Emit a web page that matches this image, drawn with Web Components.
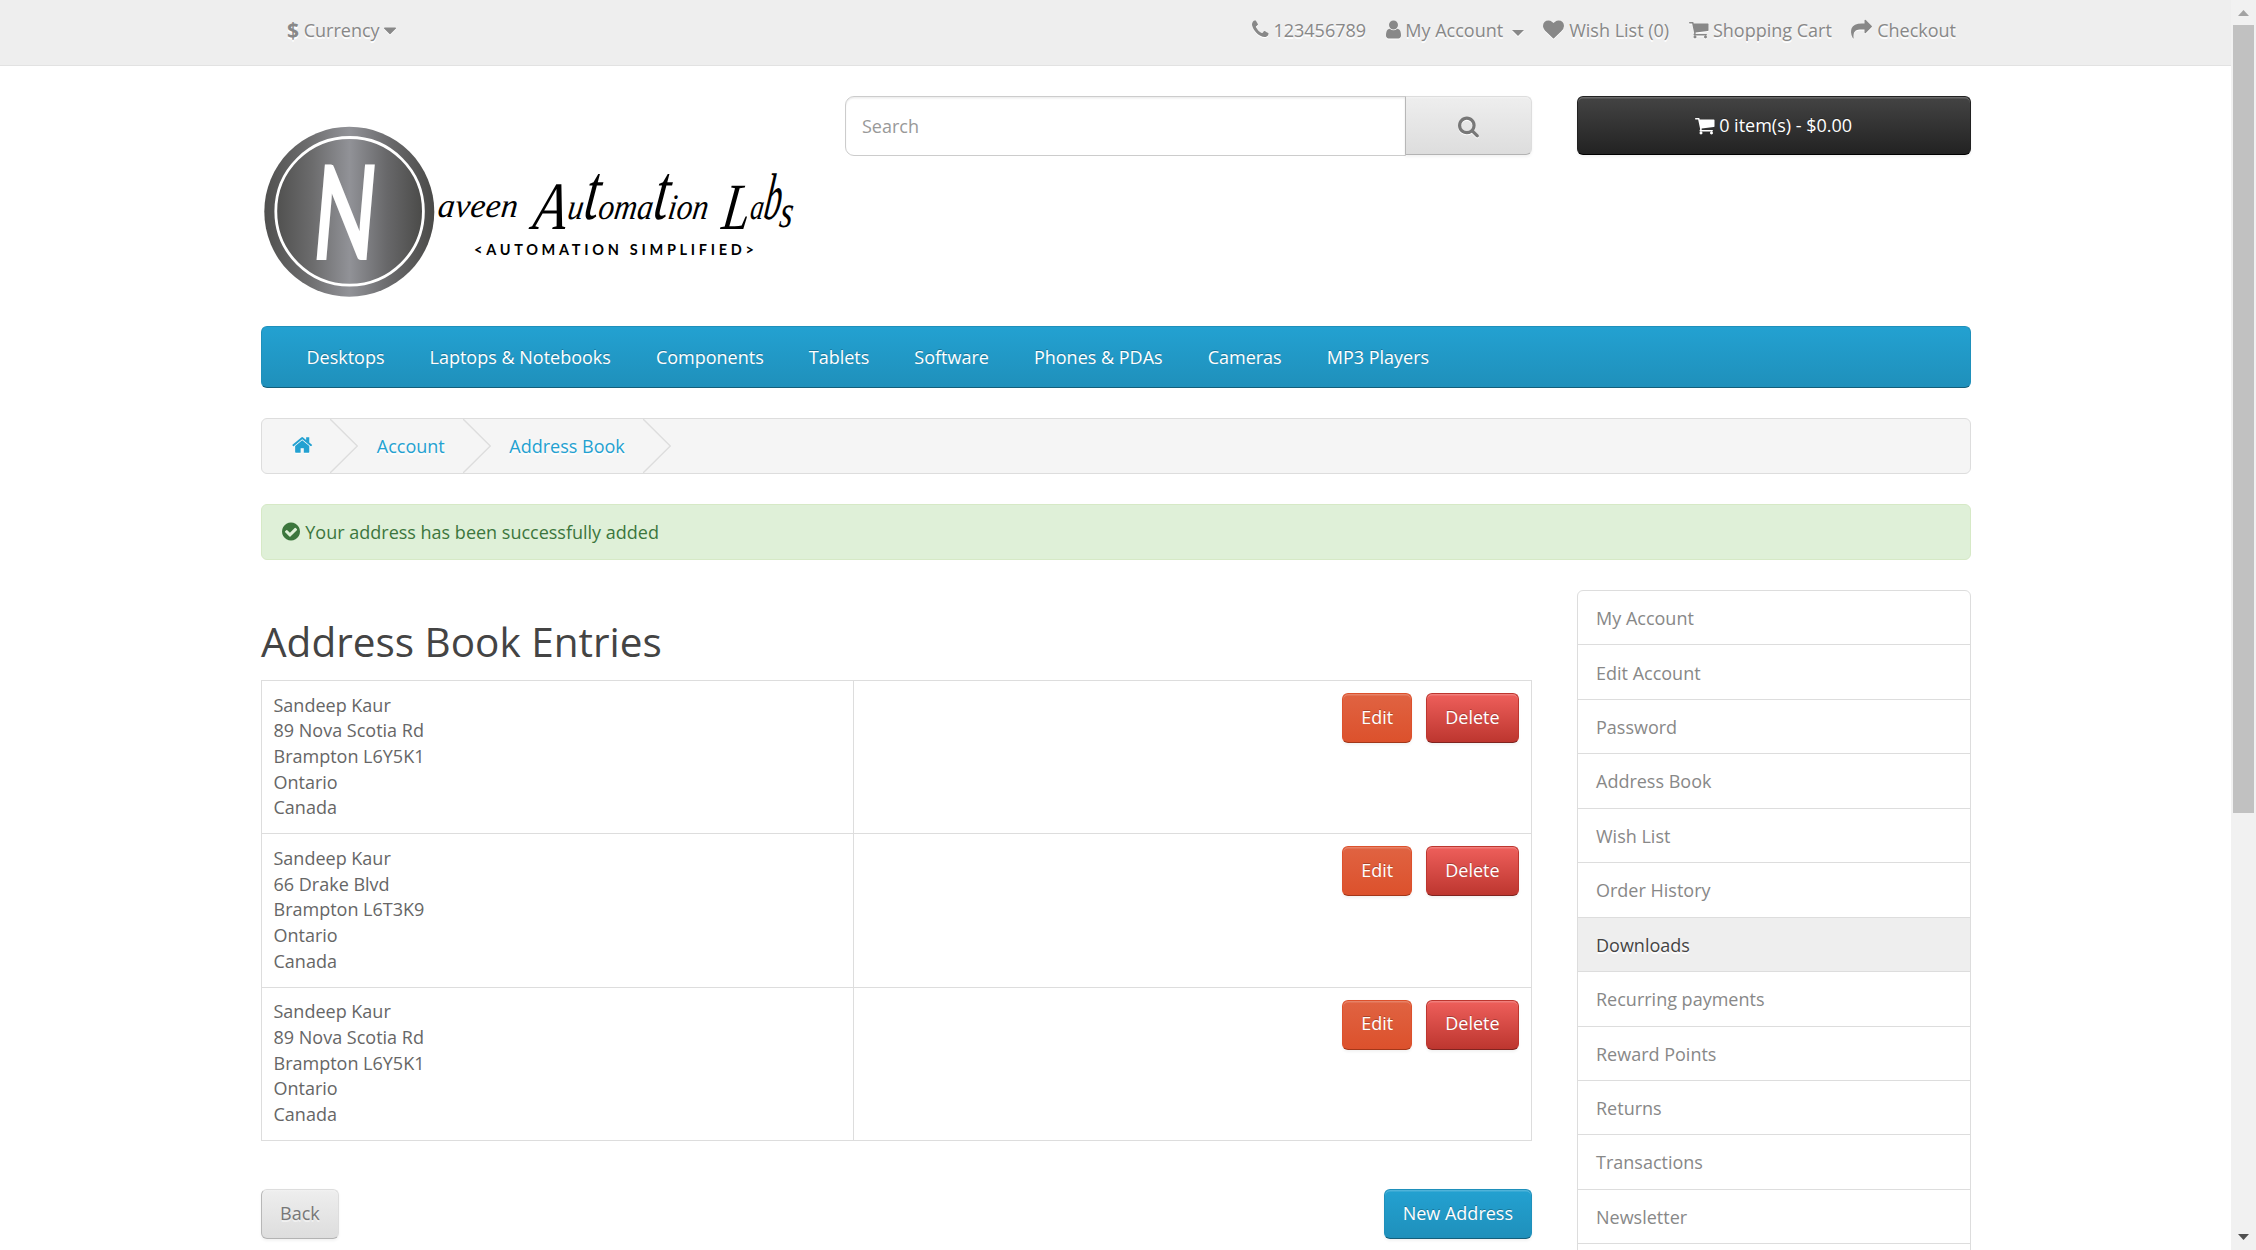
<!DOCTYPE html>
<html lang="en">
<head>
<meta charset="utf-8">
<title>Address Book</title>
<style>
html,body{margin:0;height:100%;overflow:hidden;background:#fff}
body{display:flex;height:1250px;font:400 18px/25.7px "Open Sans",sans-serif;color:#666}
</style>
</head>
<body>
<account-page></account-page>
<page-scrollbar></page-scrollbar>
<script>
const define = (name, css, html) => customElements.define(name, class extends HTMLElement {
  constructor() {
    super();
    const render = typeof html === 'function' ? html(this) : html;
    this.attachShadow({mode: 'open'}).innerHTML = `<style>*{box-sizing:border-box}:host{box-sizing:border-box}${css}</style>${render}`;
  }
});

// name: [advance width in font units, path]
const ICONS = {
  phone: [1408, 'M1600 1240q0 27-10 70.5t-21 68.5q-21 50-122 106-94 51-186 51-27 0-53-3.5t-57.5-12.5-47-14.5-55.5-20.5-49-18q-98-35-175-83-127-79-264-216t-216-264q-48-77-83-175-3-9-18-49t-20.5-55.5-14.5-47-12.5-57.5-3.5-53q0-92 51-186 56-101 106-122 25-11 68.5-21t70.5-10q14 0 21 3 18 6 53 76 11 19 30 54t35 63.5 31 53.5q3 4 17.5 25t21.5 35.5 7 28.5q0 20-28.5 50t-62 55-62 53-28.5 46q0 9 5 22.5t8.5 20.5 14 24 11.5 19q76 137 174 235t235 174q2 1 19 11.5t24 14 20.5 8.5 22.5 5q18 0 46-28.5t53-62 55-62 50-28.5q14 0 28.5 7t35.5 21.5 25 17.5q25 15 53.5 31t63.5 35 54 30q70 35 76 53 3 7 3 21z'],
  user: [1280, 'M1536 1399q0 109-62.5 187t-150.5 78h-854q-88 0-150.5-78t-62.5-187q0-85 8.5-160.5t31.5-152 58.5-131 94-89 134.5-34.5q131 128 313 128t313-128q76 0 134.5 34.5t94 89 58.5 131 31.5 152 8.5 160.5zm-256-887q0 159-112.5 271.5t-271.5 112.5-271.5-112.5-112.5-271.5 112.5-271.5 271.5-112.5 271.5 112.5 112.5 271.5z'],
  heart: [1792, 'M896 1664q-26 0-44-18l-624-602q-10-8-27.5-26t-55.5-65.5-68-97.5-53.5-121-23.5-138q0-220 127-344t351-124q62 0 126.5 21.5t120 58 95.5 68.5 76 68q36-36 76-68t95.5-68.5 120-58 126.5-21.5q224 0 351 124t127 344q0 221-229 450l-623 600q-18 18-44 18z'],
  cart: [1664, 'M704 1536q0 52-38 90t-90 38-90-38-38-90 38-90 90-38 90 38 38 90zm896 0q0 52-38 90t-90 38-90-38-38-90 38-90 90-38 90 38 38 90zm128-1088v512q0 24-16.5 42.5t-40.5 21.5l-1044 122q13 60 13 70 0 16-24 64h920q26 0 45 19t19 45-19 45-45 19h-1024q-26 0-45-19t-19-45q0-11 8-31.5t16-36 21.5-40 15.5-29.5l-177-823h-204q-26 0-45-19t-19-45 19-45 45-19h256q16 0 28.5 6.5t19.5 15.5 13 24.5 8 26 5.5 29.5 4.5 26h1201q26 0 45 19t19 45z'],
  share: [1792, 'M1792 640q0 26-19 45l-512 512q-19 19-45 19t-45-19-19-45v-256h-224q-98 0-175.5 6t-154 21.5-133 42.5-105.5 69.5-80 101-48.5 138.5-17.5 181q0 55 5 123 0 6 2.5 23.5t2.5 26.5q0 15-8.5 25t-23.5 10q-16 0-28-17-7-9-13-22t-13.5-30-10.5-24q-127-285-127-451 0-199 53-333 162-403 875-403h224v-256q0-26 19-45t45-19 45 19l512 512q19 19 19 45z'],
  search: [1664, 'M1216 832q0-185-131.5-316.5t-316.5-131.5-316.5 131.5-131.5 316.5 131.5 316.5 316.5 131.5 316.5-131.5 131.5-316.5zm512 832q0 52-38 90t-90 38q-54 0-90-38l-343-342q-179 124-399 124-143 0-273.5-55.5t-225-150-150-225-55.5-273.5 55.5-273.5 150-225 225-150 273.5-55.5 273.5 55.5 225 150 150 225 55.5 273.5q0 220-124 399l343 343q37 37 37 90z'],
  home: [1664, 'M1472 992v480q0 26-19 45t-45 19h-384v-384h-256v384h-384q-26 0-45-19t-19-45v-480q0-1 .5-3t.5-3l575-474 575 474q1 2 1 6zm223-69l-62 74q-8 9-21 11h-3q-13 0-21-7l-692-577-692 577q-12 8-24 7-13-2-21-11l-62-74q-8-10-7-23.5t11-21.5l719-599q32-26 76-26t76 26l244 204v-195q0-14 9-23t23-9h192q14 0 23 9t9 23v408l219 182q10 8 11 21.5t-7 23.5z'],
  check: [1536, 'M1412 734q0-28-18-46l-91-90q-19-19-45-19t-45 19l-408 407-226-226q-19-19-45-19t-45 19l-91 90q-18 18-18 46 0 27 18 45l362 362q19 19 45 19 27 0 46-19l543-543q18-18 18-45zm252 162q0 209-103 385.5t-279.5 279.5-385.5 103-385.5-103-279.5-279.5-103-385.5 103-385.5 279.5-279.5 385.5-103 385.5 103 279.5 279.5 103 385.5z'],
  caret: [1024, 'M1408 704q0 26-19 45l-448 448q-19 19-45 19t-45-19l-448-448q-19-19-19-45t19-45 45-19h896q26 0 45 19t19 45z']
};
define('ui-icon', ':host{display:block;flex:none}svg{display:block;overflow:visible;fill:currentColor;filter:drop-shadow(0 1.5px 0 var(--icon-shadow,transparent))}', el => {
  const [adv, d] = ICONS[el.getAttribute('name')], s = +(el.getAttribute('size') || 21);
  return `<svg width="${adv * s / 1792}" height="${s}" viewBox="${(1792 - adv) / 2} 0 ${adv} 1792"><path d="${d}"/></svg>`;
});

define('ui-button', `
:host{display:flex;align-items:center;justify-content:center;height:50px;padding:0 18px 1px;border:1px solid;border-radius:6px;color:#fff;white-space:nowrap;
 text-shadow:0 -1.5px 0 rgba(0,0,0,.25);box-shadow:inset 0 1.5px 0 rgba(255,255,255,.2),0 1.5px 3px rgba(0,0,0,.05);gap:4.7px}
:host([kind=edit]){background:linear-gradient(#e06342,#dc512c);border-color:#dc512c #dc512c #a2371a}
:host([kind=danger]){background:linear-gradient(#ee5f5b,#bd362f);border-color:#bd362f #bd362f #802420}
:host([kind=primary]){background:linear-gradient(#23a1d1,#1f90bb);border-color:#1f90bb #1f90bb #145e7a}
:host([kind=inverse]){background:linear-gradient(#444,#222);border-color:#222 #222 #000}
:host([kind=default]){background:linear-gradient(#eee,#ddd);border-color:#ddd #ddd #b3b3b3 #b7b7b7;color:#777;text-shadow:0 1.5px 0 rgba(255,255,255,.5)}`, '<slot></slot>');

define('top-link', ':host{display:flex;align-items:center;gap:4.7px;white-space:nowrap}', '<slot></slot>');
define('top-bar', `
:host{display:flex;justify-content:space-between;height:66px;background:#eee;border-bottom:1px solid #e2e2e2;padding:0 275px 4px 287px;color:#888;text-shadow:0 1.5px 0 #fff;--icon-shadow:#fff}
div{display:flex;gap:19.6px}
b{font-weight:700;font-size:21px}
ui-icon{margin-bottom:2px}
ui-icon[name=caret]{margin-bottom:0}
.tri{width:0;height:0;border:6px solid transparent;border-top-color:#888;border-bottom:0;margin:4px 0 0 4px;filter:drop-shadow(0 1px 0 #fff)}`, `
<div><top-link><b>$</b> <span>Currency</span><ui-icon name="caret"></ui-icon></top-link></div>
<div><top-link><ui-icon name="phone"></ui-icon><span>123456789</span></top-link>
<top-link><ui-icon name="user"></ui-icon><span>My Account</span><i class="tri"></i></top-link>
<top-link><ui-icon name="heart"></ui-icon><span>Wish List (0)</span></top-link>
<top-link><ui-icon name="cart"></ui-icon><span>Shopping Cart</span></top-link>
<top-link><ui-icon name="share"></ui-icon><span>Checkout</span></top-link></div>`);

define('site-logo', ':host{display:block;width:584px;height:200px}svg{display:block;overflow:visible}', `
<svg width="584" height="200" viewBox="261 96 584 200">
<defs><linearGradient id="m"><stop offset="0" stop-color="#50504f"/><stop offset=".25" stop-color="#6c6c6d"/><stop offset=".5" stop-color="#919297"/><stop offset=".75" stop-color="#68686a"/><stop offset="1" stop-color="#4a4a48"/></linearGradient></defs>
<circle cx="349.3" cy="211.7" r="85" fill="url(#m)"/>
<circle cx="349.6" cy="211.3" r="73.8" fill="url(#m)" stroke="#fff" stroke-width="2.8"/>
<text transform="translate(310 260) skewX(-5) scale(.62 1)" font-family="Lato" font-weight="700" font-size="132" fill="#fff">N</text>
<g font-family="Liberation Serif" font-style="italic" fill="#000">
<text transform="translate(437 217) skewX(-6)" font-size="34" textLength="80" lengthAdjust="spacing">aveen</text>
<text transform="translate(533 219) skewX(-8) scale(.88 1)" font-size="36"><tspan font-size="68" dy="10" textLength="38" lengthAdjust="spacingAndGlyphs">A</tspan><tspan dy="-10">u</tspan><tspan font-size="80" textLength="17" lengthAdjust="spacingAndGlyphs">t</tspan><tspan>oma</tspan><tspan font-size="80" textLength="17" lengthAdjust="spacingAndGlyphs">t</tspan><tspan>ion</tspan></text>
<text transform="translate(722 219) skewX(-8) scale(.74 1)" font-size="36"><tspan font-size="66" dy="10">L</tspan><tspan dy="-10">a</tspan><tspan font-size="66" textLength="23" lengthAdjust="spacingAndGlyphs">b</tspan><tspan font-size="46" dy="8">s</tspan></text></g>
<text x="474" y="254.5" font-family="Lato" font-weight="700" font-size="14.5" fill="#000" textLength="280" lengthAdjust="spacing">&lt;AUTOMATION SIMPLIFIED&gt;</text>
</svg>`);

define('search-box', `
:host{display:flex;align-items:flex-start;width:687px;--icon-shadow:#fff}
.f{flex:1;height:60px;display:flex;align-items:center;padding:1.5px 16px 0;border:1px solid #ccc;border-radius:9px 0 0 9px;color:#999;box-shadow:inset 0 1.5px 1.5px rgba(0,0,0,.075)}
ui-button{width:127px;height:59px;margin-left:-1px;padding-bottom:0;border-radius:0 6px 6px 0}
ui-icon{margin-top:2px}`, `
<div class="f">Search</div><ui-button kind="default"><ui-icon name="search" size="22.5"></ui-icon></ui-button>`);

define('page-header', `
:host{display:flex;height:260px;padding-top:30px}
.cart{width:394px;height:59px;margin-left:45px;padding:0 19px 0 18px}`, `
<site-logo></site-logo><search-box></search-box><ui-button class="cart" kind="inverse"><ui-icon name="cart"></ui-icon><span>0 item(s) - $0.00</span></ui-button>`);

define('nav-bar', `
:host{display:flex;align-items:center;gap:45px;height:62px;padding:2px 44.5px 0;border:1px solid;border-color:#1f90bb #1f90bb #145e7a;border-radius:6px;background:linear-gradient(#23a1d1,#1f90bb);color:#fff;text-shadow:0 -1.5px 0 rgba(0,0,0,.25);white-space:nowrap}`,
['Desktops','Laptops &amp; Notebooks','Components','Tablets','Software','Phones &amp; PDAs','Cameras','MP3 Players'].map(t => `<span>${t}</span>`).join(''));

define('bread-crumbs', `
:host{display:flex;align-items:center;height:56px;margin-top:30px;border:1px solid #ddd;border-radius:6px;background:#f5f5f5;color:#23a1d1;text-shadow:0 1.5px 0 #fff;--icon-shadow:#fff;overflow:hidden}
svg{flex:none;display:block;width:28px;height:54px;fill:none;stroke:#ddd;stroke-width:1.4}
ui-icon{margin:0 18px 2px 30px}span{margin:0 18.2px 0 18.4px;padding-top:2px}`, el => {
  const c = '<svg viewBox="0 0 28 54"><path d="M0 0L27.3 27L0 54"/></svg>';
  return `<ui-icon name="home" size="22"></ui-icon>${c}<span>Account</span>${c}<span>Address Book</span>${c}`;
});

define('alert-box', ':host{display:flex;align-items:center;gap:4.9px;height:56px;margin-top:30px;padding:0 20.4px;border:1px solid #d6e9c6;border-radius:6px;background:#dff0d8;color:#3c763d}span{padding-top:2px}ui-icon{margin-bottom:1px}', '<ui-icon name="check"></ui-icon><span><slot></slot></span>');

define('address-row', `
:host{display:flex;height:153.4px;border:1px solid #ddd;border-top:0}
.a{width:592px;padding:11.6px 11.5px;border-right:1px solid #ddd;line-height:25.67px}
.b{flex:1;display:flex;justify-content:flex-end;gap:14px;padding:12px 12.4px}`, el => `
<div class="a">${el.getAttribute('lines').split('|').map(l => `<div>${l}</div>`).join('')}</div>
<div class="b"><ui-button kind="edit">Edit</ui-button><ui-button kind="danger">Delete</ui-button></div>`);

define('address-book', `
:host{display:block;width:1271px}
h2{margin:29px 0 16px;font:400 40.5px/45px "Open Sans",sans-serif;color:#444;height:45px}
.t{border-top:1px solid #ddd}
.f{display:flex;justify-content:space-between;margin-top:48px}`, `
<h2>Address Book Entries</h2>
<div class="t"><address-row lines="Sandeep Kaur|89 Nova Scotia Rd|Brampton L6Y5K1|Ontario|Canada"></address-row>
<address-row lines="Sandeep Kaur|66 Drake Blvd|Brampton L6T3K9|Ontario|Canada"></address-row>
<address-row lines="Sandeep Kaur|89 Nova Scotia Rd|Brampton L6Y5K1|Ontario|Canada"></address-row></div>
<div class="f"><ui-button kind="default">Back</ui-button><ui-button kind="primary">New Address</ui-button></div>`);

define('account-menu', `
:host{display:block;width:394px;border:1px solid #ddd;border-radius:6px 6px 0 0;color:#888}
div{display:flex;align-items:center;height:54.45px;padding:2.4px 18px 0;border-bottom:1px solid #ddd}
.on{background:#eee;color:#444;text-shadow:0 1.5px 0 #fff}`,
['My Account','Edit Account','Password','Address Book','Wish List','Order History','Downloads','Recurring payments','Reward Points','Returns','Transactions','Newsletter',''].map(t => `<div${t === 'Downloads' ? ' class="on"' : ''}>${t}</div>`).join(''));

define('account-page', `
:host{display:block;width:2231px;height:1250px;overflow:hidden}
main{width:1710px;margin-left:261px}
.cols{display:flex;gap:45px;margin-top:30px}`, `
<top-bar></top-bar>
<main><page-header></page-header><nav-bar></nav-bar><bread-crumbs></bread-crumbs>
<alert-box>Your address has been successfully added</alert-box>
<div class="cols"><address-book></address-book><account-menu></account-menu></div></main>`);

define('page-scrollbar', `
:host{display:flex;flex-direction:column;align-items:center;width:25px;height:1250px;background:#f1f1f1}
svg{display:block;width:25px;height:25px;flex:none}
.thumb{width:21px;height:788px;background:#c1c1c1}.sp{flex:1}`, `
<svg><path d="M7 16L12.5 10L18 16z" fill="#a3a3a3"/></svg><div class="thumb"></div><div class="sp"></div>
<svg><path d="M7 9L12.5 15L18 9z" fill="#505050"/></svg>`);
</script>
</body>
</html>
